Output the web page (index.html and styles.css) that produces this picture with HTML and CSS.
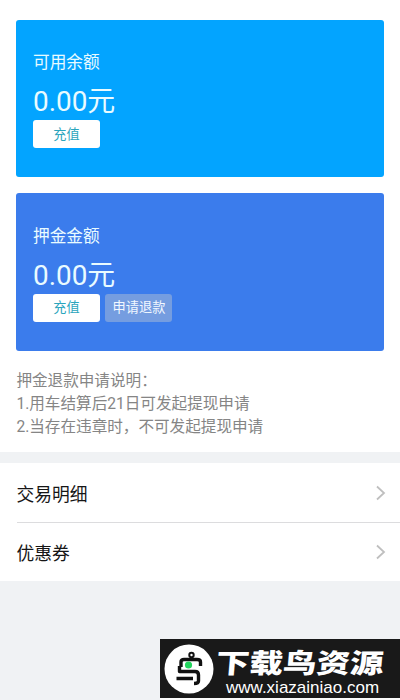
FILE: index.html
```html
<!DOCTYPE html>
<html lang="zh-CN">
<head>
<meta charset="utf-8">
<title>我的钱包</title>
<link rel="stylesheet" href="styles.css">
</head>
<body>
<main class="wallet">
  <section class="card balance">
    <h2 class="card-title">可用余额</h2>
    <p class="amount">0.00元</p>
    <div class="actions"><button class="btn">充值</button></div>
  </section>
  <section class="card deposit">
    <h2 class="card-title">押金金额</h2>
    <p class="amount">0.00元</p>
    <div class="actions"><button class="btn">充值</button><button class="btn ghost">申请退款</button></div>
  </section>
  <div class="notes">
    <p>押金退款申请说明：</p>
    <p>1.用车结算后21日可发起提现申请</p>
    <p>2.当存在违章时，不可发起提现申请</p>
  </div>
</main>
<nav class="menu">
  <a class="row"><span>交易明细</span><svg class="chevron" viewBox="0 0 10 16"><path d="M1 1.500 8 8 1 14.500"/></svg></a>
  <a class="row"><span>优惠券</span><svg class="chevron" viewBox="0 0 10 16"><path d="M1 1.500 8 8 1 14.500"/></svg></a>
</nav>
<footer class="brand">
  <svg class="logo" viewBox="0 0 50 50">
    <circle cx="25" cy="25" r="24.500" fill="#fff"/>
    <g fill="none" stroke="#111" stroke-width="3.400" stroke-linejoin="round">
      <circle cx="27.500" cy="11" r="2.200" stroke-width="2"/>
      <path d="M17 23V18Q17 15.500 20 15.500H33Q36.500 15.500 36.500 18V22"/>
      <path d="M15.500 22V27.500H31Q34.500 27.500 34.500 31V37Q34.500 39.500 30 39.500M12.500 34.500H29"/>
    </g>
    <circle cx="24.500" cy="21" r="3.600" fill="#22d45d"/>
  </svg>
  <div class="brand-text">
    <strong class="brand-name">下载鸟资源</strong>
    <span class="brand-url">www.xiazainiao.com</span>
  </div>
</footer>
</body>
</html>
```
FILE: styles.css
```css
* { box-sizing: border-box; margin: 0; padding: 0; }
body {
  height: 700px;
  display: flex;
  flex-direction: column;
  overflow: hidden;
  background: #f0f2f4;
  font-family: Roboto, "Noto Sans CJK SC", sans-serif;
}
.wallet { height: 452.4px; padding: 20px 16px 0 16.4px; background: #fff; }
.card { height: 157.4px; padding: 31px 16.6px 0; border-radius: 3px; color: #e9fbff; }
.balance { background: #03a4ff; }
.deposit { margin-top: 16px; padding-top: 31.7px; background: #3b7cec; }
.card-title { font-size: 16.7px; line-height: 24px; font-weight: 400; }
.amount { margin-top: 8px; font-size: 27.9px; line-height: 38px; }
.actions { display: flex; gap: 5.5px; margin-top: -0.6px; }
.btn {
  width: 67px;
  height: 27.5px;
  border: 0;
  border-radius: 3px;
  background: #fff;
  color: #2ba5bd;
  font: 13.2px/27px Roboto, "Noto Sans CJK SC", sans-serif;
}
.deposit .actions { margin-top: -1px; }
.btn.ghost { background: #759de0; color: #f2f8ff; }
.notes { margin-top: 18.8px; color: #858585; font-size: 15.6px; line-height: 23px; }
.menu { height: 118px; margin-top: 10.6px; background: #fff; }
.row {
  height: 59px;
  margin-left: 16.5px;
  padding: 1px 14px 0 0;
  display: flex;
  align-items: center;
  justify-content: space-between;
  font-size: 17.8px;
  color: #161616;
}
.row + .row { padding-top: 0; border-top: 1px solid #dcdcde; }
.chevron { width: 10px; height: 16px; fill: none; stroke: #bfbfbf; stroke-width: 1.8; }
.brand {
  width: 240px;
  height: 59px;
  margin: auto 0 2px auto;
  padding: 5px 0 0 4px;
  display: flex;
  gap: 3px;
  background: #191919;
  color: #fff;
  box-shadow: 0 2px #fafafa;
}
.logo { width: 50px; height: 50px; flex: none; }
.brand-text { display: flex; flex-direction: column; align-items: flex-start; padding-top: 5px; white-space: nowrap; }
.brand-name {
  font-size: 27px;
  line-height: 30px;
  font-weight: 900;
  transform: translateX(-1px) scaleX(1.24) skewX(-4deg);
  transform-origin: left center;
}
.brand-url { padding-left: 9px; font: 17px/18px "Liberation Sans", sans-serif; }
```
